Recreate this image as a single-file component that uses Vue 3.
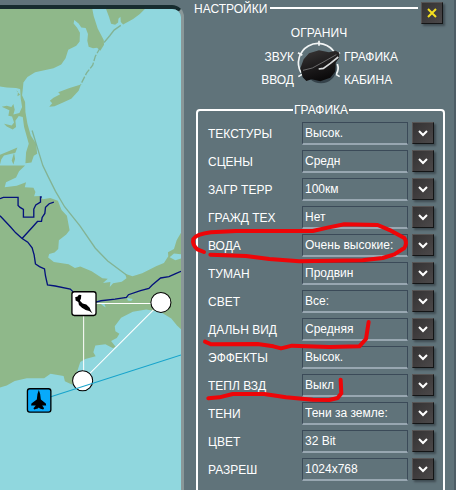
<template>
  <div class="screen">
    <section class="map">
      <svg class="map-view" viewBox="0 27 541 1443" preserveAspectRatio="xMinYMin slice" role="img" aria-label="Карта">
        <rect class="sea" x="0" y="0" width="1200" height="3000" />
        <!-- Land -->
        <g class="land">
          <path d="M0 27H276L280 48L292 85L310 120L311 134L300 152L290 143L278 144L265 140L261 122L263 102L256 84L243 82L235 70L222 60L220 70L230 82L239 98L238 124L228 137L204 149L196 174L183 193L160 204L105 216L82 230L70 247L68 268L48 263L20 262L0 259Z" />
          <path d="M317 27H433L418 42L398 57L368 73L361 66L360 50L354 56L353 67L344 74L332 71L326 51Z" />
          <path d="M242 253L208 263L174 276L180 282L160 292L149 301L156 309L147 319L163 318L190 306L213 295L235 271Z" />
          <path d="M60 262L68 268L66 285L75 305L76 335L82 370L92 405L108 430L111 460L101 466L94 486L76 488L78 455L86 430L72 380L68 350L56 347L46 361L48 380L38 387L20 378L12 370L35 375L42 366L36 348L25 346L28 330L5 319L20 316L34 320L40 311L44 328L40 342L58 338L66 320L62 295Z" />
          <path d="M0 463L22 454L52 441L46 457L12 465L4 476L0 492ZM35 480L42 457L45 475L40 492ZM48 270L54 274L52 288L60 283Z" />
          <path d="M0 495H75L57 512L48 531L18 545L14 560L50 555L78 545L74 560L100 561L106 574L102 587L120 586L128 596L150 592L173 600L184 628L200 645L208 688L198 701L176 718L174 744L163 755L147 759L144 770L161 783L205 790L224 801L240 797L274 811L306 832L322 833L308 846L330 843L328 858L338 847L364 842L378 832L374 818L396 826L425 817L468 795L490 786L503 766L502 754L520 744L528 718L541 696V760L520 758L507 769L524 778L541 773V984L529 973L512 952L480 933L437 925L397 932L362 950L343 975L345 990L357 998L349 1010L332 1019L345 1036L338 1041L315 1029L285 1033L279 1053L286 1065L255 1073L240 1082L230 1113L221 1137L216 1150L194 1140L190 1124L151 1117L132 1131L80 1131L44 1139L20 1152L0 1158Z" />
        </g>
        <g class="spit">
          <path d="M361 76L341 90L328 107L311 127" />
          <path stroke-dasharray="20 5" d="M300 142L285 168L277 195L259 218L241 253" />
          <path d="M96 390L110 436L128 495L144 528L166 572L193 618L239 675L285 742L322 780L378 822" />
        </g>
        <path class="sea" d="M300 907L312 908L316 919L308 914ZM380 891L397 894L392 900L382 898Z" />
        <path class="river" d="M0 594L10 590H54V614L60 620L70 626V649H101V625L107 613L121 604V589H125M161 604L147 609L136 620L134 638L126 650L124 662H112L98 678L66 713M0 645L31 678L47 696L66 713L83 724L96 741L102 762L106 789L118 797L133 804L136 825L142 852L165 855L210 864L220 874M286 903L302 899L344 894L378 889L384 881L420 869L445 862L455 852L480 831L505 827L525 818L541 811" />

        <!-- Routes -->
        <path class="route" d="M250 907H481M250 907V1138M247 1138L481 904" />
        <circle class="waypoint" cx="481" cy="904" r="30" />
        <circle class="waypoint" cx="247" cy="1138" r="30" />
        <path class="course" d="M117 1197L541 1061" />

        <!-- Units -->
        <rect class="unit" x="215" y="872" width="72" height="71" rx="7" />
        <path d="M225 888L231 887L236 881L243 882L242 892L239 899L247 907L258 910L268 920L272 930L277 937L267 930L256 927L245 920L236 912L234 903L226 898Z" />
        <rect class="unit own" x="82" y="1162" width="70" height="70" rx="7" />
        <path d="M116 1166L120 1178L122 1194L137 1206L138 1212L126 1212L132 1220L129 1224L119 1221L116 1218L113 1221L102 1224L100 1220L107 1212H93L94 1206L110 1194L112 1178Z" />
      </svg>
    </section>

    <section class="panel">
      <header class="panel-header">
        <h1 class="panel-title">НАСТРОЙКИ</h1>
        <span class="rule"></span>
        <button class="key close" type="button" aria-label="Закрыть">
          <svg viewBox="0 0 12 12"><path d="M2 2L10 10M10 2L2 10" /></svg>
        </button>
      </header>

      <nav class="dial">
        <button
          v-for="tab in tabs"
          :key="tab.id"
          type="button"
          class="dial-tab"
          :class="tab.id"
          @click="current = tab.id"
        >
          {{ tab.label }}
        </button>
        <svg class="knob" viewBox="360 135 144 138" aria-hidden="true">
          <defs>
            <linearGradient id="knobFace" x1="0" y1="0" x2="0.4" y2="1">
              <stop offset="0" stop-color="#3a3737" />
              <stop offset="0.5" stop-color="#211f20" />
              <stop offset="1" stop-color="#0b0a0b" />
            </linearGradient>
          </defs>
          <path class="ring" d="M378 218A58 58 0 0 1 480 160M487 192Q493 208 484 222" />
          <path class="ticks" d="M432 122V137M369 158L382 166M495 158L484 165M370 230L381 223M494 230L483 223" />
          <ellipse class="knob-shadow" cx="438" cy="206" rx="46" ry="44" />
          <path fill="url(#knobFace)" d="M376 205L386 178L402 160L432 151L462 157L482 152L493 158L492 175L482 188L480 215L466 233L436 244L410 238L394 243L383 232Z" />
          <path class="knob-edge" d="M384 211L412 204L447 185L484 164" />
          <path class="pointer" d="M431 207L445 205L466 190L490 171" />
        </svg>
      </nav>

      <fieldset class="group">
        <legend>ГРАФИКА</legend>
        <div v-for="row in rows" :key="row.id" class="row">
          <label :for="row.id">{{ row.label }}</label>
          <select :id="row.id" v-model="row.value">
            <option>{{ row.value }}</option>
          </select>
          <button class="key" type="button" :aria-label="row.label" @click="openList(row.id)">
            <svg viewBox="0 0 12 12"><path d="M2 4L6 8L10 4" /></svg>
          </button>
        </div>
      </fieldset>

      <!-- Red marker -->
      <svg class="marker" viewBox="0 0 272 490" aria-hidden="true">
        <g transform="translate(2 200) scale(0.3333)">
          <path d="M54 156L34 148Q18 134 22 117Q32 102 75 97L150 93L380 93L425 83L475 73L575 75L615 92L655 114Q665 128 655 144L625 163L590 174L530 181L340 184L250 177L180 168L73 164" />
        </g>
        <g transform="translate(2 295) scale(0.3333)">
          <path d="M57 140L76 148L215 147L262 154L285 160L318 152L430 156L520 154L540 132L548 81" />
          <path d="M67 310L100 307L140 297L235 297L300 307L380 314L430 315L455 309L466 295L464 254" />
        </g>
      </svg>
    </section>
  </div>
</template>

<script setup>
import { ref } from 'vue';

const current = ref('graphics');

const tabs = [
  { id: 'limits', label: 'ОГРАНИЧ' },
  { id: 'sound', label: 'ЗВУК' },
  { id: 'graphics', label: 'ГРАФИКА' },
  { id: 'input', label: 'ВВОД' },
  { id: 'cockpit', label: 'КАБИНА' }
];

const rows = ref([
  { id: 'textures', label: 'ТЕКСТУРЫ', value: 'Высок.' },
  { id: 'scenes', label: 'СЦЕНЫ', value: 'Средн' },
  { id: 'terrain', label: 'ЗАГР ТЕРР', value: '100км' },
  { id: 'traffic', label: 'ГРАЖД ТЕХ', value: 'Нет' },
  { id: 'water', label: 'ВОДА', value: 'Очень высокие:' },
  { id: 'fog', label: 'ТУМАН', value: 'Продвин' },
  { id: 'light', label: 'СВЕТ', value: 'Все:' },
  { id: 'distance', label: 'ДАЛЬН ВИД', value: 'Средняя' },
  { id: 'effects', label: 'ЭФФЕКТЫ', value: 'Высок.' },
  { id: 'heat', label: 'ТЕПЛ ВЗД', value: 'Выкл' },
  { id: 'shadows', label: 'ТЕНИ', value: 'Тени за земле:' },
  { id: 'color', label: 'ЦВЕТ', value: '32 Bit' },
  { id: 'resolution', label: 'РАЗРЕШ', value: '1024x768' }
]);

function openList(id) {
  document.getElementById(id).showPicker();
}
</script>

<style>
body {
  background: #60737a;
}
</style>

<style scoped>
.screen {
  display: grid;
  grid-template-columns: 46fr 68fr;
  grid-template-rows: minmax(0, 1fr);
  height: 100vh;
  overflow: hidden;
  background: #60737a;
  color: #fff;
  font-family: "Liberation Sans", Arial, sans-serif;
  font-size: 12px;
  line-height: 16px;
}

.map {
  position: relative;
  margin-top: 5px;
  border-top: 4px solid #172c2f;
  border-right: 3px solid #8a9899;
  border-top-right-radius: 12px;
  overflow: hidden;
}

.map-view {
  position: absolute;
  inset: 0;
  width: 100%;
  height: 100%;
}

.sea {
  fill: #90d7de;
}

.land {
  fill: #8fb88a;
}

.spit {
  fill: none;
  stroke: #83b394;
  stroke-width: 4;
}

.river {
  fill: none;
  stroke: #04127c;
  stroke-width: 4;
}

.route {
  fill: none;
  stroke: #fff;
  stroke-width: 3;
}

.waypoint {
  fill: #fff;
  stroke: #000;
  stroke-width: 3;
}

.course {
  fill: none;
  stroke: #16a3cb;
  stroke-width: 3;
}

.unit {
  fill: #fff;
  stroke: #000;
  stroke-width: 4;
}

.unit.own {
  fill: #08aafa;
}

.panel {
  position: relative;
  border-right: 2px solid #4d5d66;
}

.panel-header {
  display: flex;
  align-items: flex-start;
  gap: 3px;
  height: 25px;
  padding: 0 11px 0 10px;
}

.panel-title {
  margin: 1px 0 0;
  font-size: 12px;
  font-weight: normal;
}

.rule {
  flex: 1;
  height: 2px;
  margin-top: 7px;
  background: #fff;
}

.key {
  display: flex;
  align-items: center;
  justify-content: center;
  width: 22px;
  height: 22px;
  padding: 0;
  border: 1px solid;
  border-color: #575454 #141516 #141516 #575454;
  background: linear-gradient(135deg, #343233, #4b4849);
  box-shadow: 2px 2px 2px #3f4c52;
}

.key svg {
  width: 12px;
  height: 12px;
  fill: none;
  stroke: #fff;
  stroke-width: 2;
}

.close {
  margin-top: 2px;
}

.close svg {
  stroke: #f5e020;
}

.dial {
  display: grid;
  grid-template-columns: 1fr 50px 1fr;
  grid-template-rows: 20px 23px 23px;
  align-items: center;
}

.dial-tab {
  padding: 0;
  border: 0;
  background: none;
  color: inherit;
  font: inherit;
}

.limits {
  grid-area: 1 / 1 / 2 / 4;
  justify-self: center;
  align-self: start;
}

.sound {
  grid-area: 2 / 1;
  justify-self: end;
}

.graphics {
  grid-area: 2 / 3;
  justify-self: start;
}

.input {
  grid-area: 3 / 1;
  justify-self: end;
}

.cockpit {
  grid-area: 3 / 3;
  justify-self: start;
}

.knob {
  grid-area: 2 / 2 / 4 / 3;
  justify-self: center;
  width: 48px;
  height: 46px;
  overflow: visible;
}

.ring,
.ticks {
  fill: none;
  stroke: #f2f5f5;
  stroke-width: 5;
}

.knob-shadow {
  fill: #35424a;
}

.knob-edge {
  fill: none;
  stroke: #6c6b6c;
  stroke-width: 3;
}

.pointer {
  fill: none;
  stroke: #d8dadb;
  stroke-width: 5;
}

.group {
  display: grid;
  gap: 5px;
  min-width: 0;
  margin: 11px 9px 0 12px;
  padding: 4px 9px 24px 10px;
  border: 2px solid #fff;
  border-radius: 4px;
}

.group legend {
  margin: 0 auto;
  padding: 0 1px;
}

.row {
  display: grid;
  grid-template-columns: 45fr 53fr 22px;
  column-gap: 4px;
  align-items: center;
  height: 23px;
}

.row .key {
  align-self: start;
}

.row select {
  appearance: none;
  width: 100%;
  min-width: 0;
  height: 23px;
  padding: 0 0 0 2px;
  border: 1px solid #3b4a58;
  border-bottom: 2px solid #98a7b1;
  border-radius: 0;
  background: transparent;
  color: inherit;
  font: inherit;
}

.marker {
  position: absolute;
  top: 0;
  left: 0;
  width: 272px;
  height: 490px;
  overflow: visible;
  pointer-events: none;
}

.marker path {
  fill: none;
  stroke: #ee0508;
  stroke-width: 12;
  stroke-linecap: round;
  stroke-linejoin: round;
}
</style>
